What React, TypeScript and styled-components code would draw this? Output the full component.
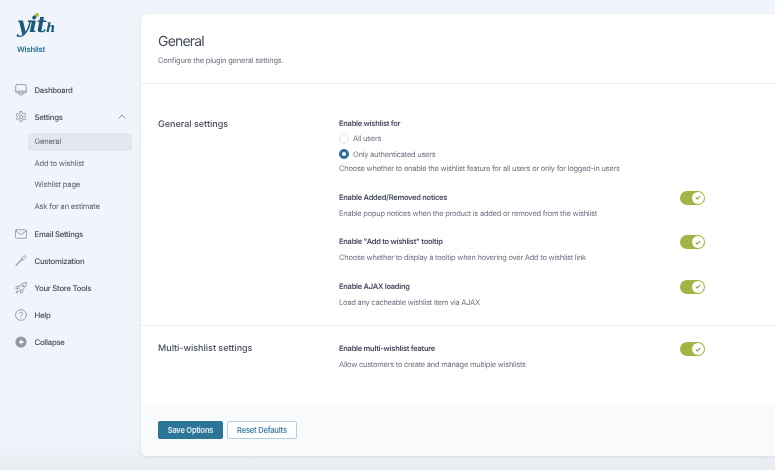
import React from "react";
import styled, { createGlobalStyle } from "styled-components";

const GlobalStyle = createGlobalStyle`
  html, body {
    margin: 0;
    height: 100%;
    overflow: hidden;
    background: #f0f4fb;
    font-family: Inter, "Liberation Sans", sans-serif;
    text-rendering: geometricPrecision;
    -webkit-font-smoothing: antialiased;
  }
`;

const Page = styled.div`
  display: flex;
  width: 775px;
  height: 470px;
  overflow: hidden;
  filter: blur(0.3px);
  background: linear-gradient(180deg, #f0f4fb 0, #f0f4fb 440px, #e8ebef 470px);
`;

const Sidebar = styled.aside`
  flex: 0 0 141px;
  display: flex;
  flex-direction: column;
`;

const Brand = styled.div`
  display: flex;
  flex-direction: column;
  padding: 9px 0 0 17px;
  height: 67px;
`;

const LogoMark = styled.div`
  position: relative;
  width: 40px;
  height: 32px;
  font-family: "DejaVu Serif", serif;
  font-style: italic;
  font-weight: 700;
  font-size: 22px;
  line-height: 32px;
  letter-spacing: -0.8px;
  color: #1c5a7c;
`;

const LogoTail = styled.span`
  font-size: 13px;
`;

const LogoDot = styled.span`
  position: absolute;
  left: 18px;
  top: 4px;
  width: 4px;
  height: 4px;
  border-radius: 50%;
  background: #a4bc3c;
`;

const BrandName = styled.div`
  margin-top: 4px;
  font-size: 7.7px;
  font-weight: 600;
  letter-spacing: -0.22px;
  color: #2a7195;
`;

const Nav = styled.nav`
  display: flex;
  flex-direction: column;
  padding-left: 15px;
`;

const NavItem = styled.div`
  display: flex;
  align-items: center;
  gap: 7.5px;
  height: 27px;
  font-size: 7.8px;
  font-weight: 500;
  letter-spacing: -0.28px;
  color: #474d5f;
`;

const NavIcon = styled.svg`
  flex: 0 0 12px;
  width: 12px;
  height: 12px;
  fill: none;
  stroke: #8f97a8;
  stroke-width: 0.9;
  stroke-linecap: round;
  stroke-linejoin: round;
`;

const Chevron = styled.svg`
  width: 8px;
  height: 5px;
  margin-left: auto;
  margin-right: 15px;
  fill: none;
  stroke: #8f97a8;
  stroke-width: 1;
`;

const SubNav = styled.div`
  display: flex;
  flex-direction: column;
  gap: 3.7px;
  margin: 2.5px 0 4.5px 13px;
  width: 104px;
`;

const SubItem = styled.div<{ active?: boolean }>`
  display: flex;
  align-items: center;
  height: 18px;
  padding-left: 6.5px;
  border-radius: 3px;
  font-size: 7.6px;
  letter-spacing: -0.2px;
  color: #5b6172;
  background: ${({ active }) => (active ? "#e4e7ee" : "transparent")};
`;

const Card = styled.main`
  flex: 1;
  display: flex;
  flex-direction: column;
  margin-top: 14px;
  height: 442px;
  background: #fff;
  border-radius: 6px 0 0 6px;
  box-shadow: 0 1px 3px rgba(60, 70, 90, 0.12);
`;

const Header = styled.header`
  flex: 0 0 70px;
  box-sizing: border-box;
  padding: 18.5px 17px 0;
  border-bottom: 1px solid #ebedf1;
`;

const Title = styled.h1`
  margin: 0;
  font-size: 14px;
  line-height: 18px;
  font-weight: 400;
  letter-spacing: -0.8px;
  color: #474d5f;
`;

const Subtitle = styled.p`
  margin: 5px 0 0;
  font-size: 7.5px;
  line-height: 10px;
  letter-spacing: -0.2px;
  color: #6b7181;
`;

const Section = styled.section<{ last?: boolean }>`
  display: flex;
  flex: none;
  padding: ${({ last }) => (last ? "16px 0 0 17px" : "33px 0 16.5px 17px")};
  border-bottom: ${({ last }) => (last ? "none" : "1px solid #ebedf1")};
`;

const SectionName = styled.h2<{ raised?: boolean }>`
  flex: 0 0 181px;
  margin: ${({ raised }) => (raised ? "-0.5px 0 0" : "0.5px 0 0")};
  font-size: 9px;
  line-height: 14px;
  font-weight: 500;
  color: #474d5f;
`;

const Options = styled.div`
  width: 366px;
  display: flex;
  flex-direction: column;
  gap: 15.5px;
`;

const Option = styled.div`
  position: relative;
  display: flex;
  flex-direction: column;
`;

const OptionLabel = styled.div`
  font-size: 7.5px;
  line-height: 14px;
  font-weight: 600;
  letter-spacing: -0.26px;
  color: #474d5f;
`;

const Description = styled.div<{ tight?: boolean }>`
  margin-top: ${({ tight }) => (tight ? "1px" : "3px")};
  font-size: 7.5px;
  line-height: 12px;
  letter-spacing: -0.25px;
  color: #6b7181;
`;

const RadioRow = styled.label`
  display: flex;
  align-items: center;
  gap: 4px;
  height: 15.5px;
  font-size: 7.5px;
  letter-spacing: -0.25px;
  color: #6b7181;
`;

const RadioDot = styled.span<{ checked?: boolean }>`
  box-sizing: border-box;
  width: 10px;
  height: 10px;
  border-radius: 50%;
  background: #fff;
  border: ${({ checked }) =>
    checked ? "3px solid #2a7195" : "1px solid #e4e6ea"};
`;

const Toggle = styled.span`
  position: absolute;
  right: 0;
  top: 0;
  display: flex;
  align-items: center;
  justify-content: flex-end;
  width: 25px;
  height: 14px;
  padding-right: 1px;
  box-sizing: border-box;
  border-radius: 7px;
  background: #a0b545;
`;

const Knob = styled.span`
  display: flex;
  align-items: center;
  justify-content: center;
  width: 12px;
  height: 12px;
  border-radius: 50%;
  background: #fff;
`;

const Footer = styled.footer`
  display: flex;
  gap: 4px;
  margin-top: auto;
  flex: 0 0 52px;
  box-sizing: border-box;
  padding: 17px 0 0 17px;
  background: #f8fafc;
  border-radius: 0 0 0 6px;
`;

const Button = styled.button<{ primary?: boolean }>`
  height: 18px;
  box-sizing: border-box;
  padding: 0;
  width: ${({ primary }) => (primary ? "65px" : "70px")};
  border-radius: 2px;
  font-family: inherit;
  font-size: 7.5px;
  font-weight: 600;
  letter-spacing: -0.2px;
  color: ${({ primary }) => (primary ? "#e8f1f6" : "#3f83a6")};
  background: ${({ primary }) => (primary ? "#2b7598" : "#fff")};
  border: 1px solid ${({ primary }) => (primary ? "#2b7598" : "#b4d0de")};
`;

const CheckedToggle = () => (
  <Toggle>
    <Knob>
      <svg width="6" height="5" viewBox="0 0 7 6" fill="none">
        <path d="M1 3.2 2.7 4.8 6 1.2" stroke="#7f9433" strokeWidth="1.3" />
      </svg>
    </Knob>
  </Toggle>
);

const icons: Record<string, React.ReactNode> = {
  dashboard: (
    <>
      <rect x="0.7" y="0.6" width="10.6" height="8.2" rx="1" />
      <path d="M0.7 7.2h10.6M4.2 8.8v2h3.6v-2" />
    </>
  ),
  settings: (
    <>
      <circle cx="6" cy="6" r="1.8" />
      <path d="M5 .6h2l.3 1.6 1.2.6 1.4-.8 1 1.7-1.2 1.1v1.4l1.2 1.1-1 1.7-1.4-.8-1.2.6-.3 1.6H5l-.3-1.6-1.2-.6-1.4.8-1-1.7 1.2-1.1V5.2L1.1 4.1l1-1.7 1.4.8 1.2-.6z" />
    </>
  ),
  mail: (
    <>
      <rect x="0.4" y="1.8" width="11.2" height="8.4" rx="1" />
      <path d="M0.8 3 6 6.6 11.2 3" />
    </>
  ),
  custom: (
    <>
      <path d="M7.6 4.4 2.4 9.6 1 11l.4-1.8 5.2-5.2z" />
      <path d="M6.6 3.4 8.6 1.2c.5-.5 1.2-.5 1.7 0s.5 1.2 0 1.7L8.2 5z" />
    </>
  ),
  rocket: (
    <>
      <path d="M11.4.6c-3-.2-5 1-6.4 3L3.4 6l2.6 2.6 2.4-1.6c2-1.4 3.2-3.4 3-6.4z" />
      <circle cx="8" cy="4" r="1" />
      <path d="M4 4 1.6 4.4.6 6.4 3 6.6M8 8l-.4 2.4-2 1-.2-2.4M2.6 8.2 1 11l2.8-1.6" />
    </>
  ),
  help: (
    <>
      <circle cx="6" cy="6" r="5.4" />
      <path d="M4.4 4.6C4.5 3.6 5.2 3.2 6 3.2c1 0 1.7.6 1.7 1.4 0 1.2-1.7 1.3-1.7 2.6M6 8.8v.2" />
    </>
  ),
};

const Icon = ({ name }: { name: string }) => (
  <NavIcon viewBox="0 0 12 12">{icons[name]}</NavIcon>
);

const App = () => {
  return (
    <Page>
      <GlobalStyle />
      <Sidebar>
        <Brand>
          <LogoMark>
            yit<LogoTail>h</LogoTail>
            <LogoDot />
          </LogoMark>
          <BrandName>Wishlist</BrandName>
        </Brand>
        <Nav>
          <NavItem>
            <Icon name="dashboard" />
            Dashboard
          </NavItem>
          <NavItem>
            <Icon name="settings" />
            Settings
            <Chevron viewBox="0 0 8 5">
              <path d="M.6 4.4 4 1l3.4 3.4" />
            </Chevron>
          </NavItem>
          <SubNav>
            <SubItem active>General</SubItem>
            <SubItem>Add to wishlist</SubItem>
            <SubItem>Wishlist page</SubItem>
            <SubItem>Ask for an estimate</SubItem>
          </SubNav>
          <NavItem>
            <Icon name="mail" />
            Email Settings
          </NavItem>
          <NavItem>
            <Icon name="custom" />
            Customization
          </NavItem>
          <NavItem>
            <Icon name="rocket" />
            Your Store Tools
          </NavItem>
          <NavItem>
            <Icon name="help" />
            Help
          </NavItem>
          <NavItem>
            <svg width="12" height="12" viewBox="0 0 12 12">
              <circle cx="6" cy="6" r="5.6" fill="#8f97a8" />
              <path d="M6.6 3 3.8 6l2.8 3V7h2V5h-2z" fill="#f0f4fb" />
            </svg>
            Collapse
          </NavItem>
        </Nav>
      </Sidebar>
      <Card>
        <Header>
          <Title>General</Title>
          <Subtitle>Configure the plugin general settings.</Subtitle>
        </Header>
        <Section>
          <SectionName>General settings</SectionName>
          <Options>
            <Option>
              <OptionLabel>Enable wishlist for</OptionLabel>
              <RadioRow>
                <RadioDot />
                All users
              </RadioRow>
              <RadioRow>
                <RadioDot checked />
                Only authenticated users
              </RadioRow>
              <Description tight>
                Choose whether to enable the wishlist feature for all users or
                only for logged-in users
              </Description>
            </Option>
            <Option>
              <OptionLabel>Enable Added/Removed notices</OptionLabel>
              <CheckedToggle />
              <Description>
                Enable popup notices when the product is added or removed from
                the wishlist
              </Description>
            </Option>
            <Option>
              <OptionLabel>Enable "Add to wishlist" tooltip</OptionLabel>
              <CheckedToggle />
              <Description>
                Choose whether to display a tooltip when hovering over Add to
                wishlist link
              </Description>
            </Option>
            <Option>
              <OptionLabel>Enable AJAX loading</OptionLabel>
              <CheckedToggle />
              <Description>Load any cacheable wishlist item via AJAX</Description>
            </Option>
          </Options>
        </Section>
        <Section last>
          <SectionName raised>Multi-wishlist settings</SectionName>
          <Options>
            <Option>
              <OptionLabel>Enable multi-wishlist feature</OptionLabel>
              <CheckedToggle />
              <Description>
                Allow customers to create and manage multiple wishlists
              </Description>
            </Option>
          </Options>
        </Section>
        <Footer>
          <Button primary>Save Options</Button>
          <Button>Reset Defaults</Button>
        </Footer>
      </Card>
    </Page>
  );
};

export default App;
